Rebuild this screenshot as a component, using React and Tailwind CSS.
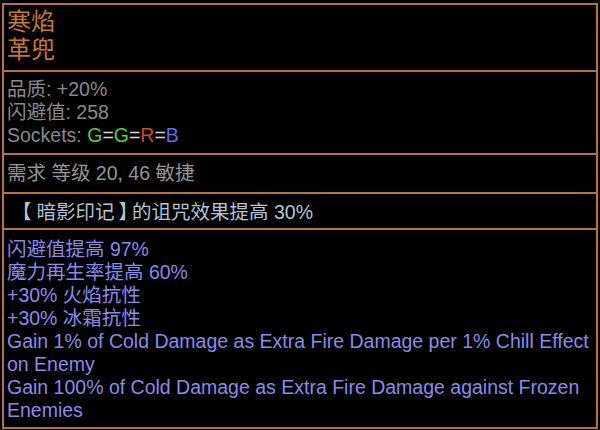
const FONT = "font-['Liberation_Sans','Noto_Sans_CJK_SC',sans-serif]";

function Section({ className = "", children }) {
  return <div className={`px-[3px] ${className}`}>{children}</div>;
}

function Divider() {
  return <div className="h-[2px] bg-[#b8713a]" />;
}

const explicit = [
  "闪避值提高 97%",
  "魔力再生率提高 60%",
  "+30% 火焰抗性",
  "+30% 冰霜抗性",
  "Gain 1% of Cold Damage as Extra Fire Damage per 1% Chill Effect on Enemy",
  "Gain 100% of Cold Damage as Extra Fire Damage against Frozen Enemies",
];

export default function App() {
  return (
    <div className={`w-[600px] h-[430px] bg-black pt-[3px] pl-[2px] pr-[2px] pb-[1px] ${FONT}`}>
      <div className="h-full flex flex-col border-2 border-[#b8713a] bg-black">
        <Section className="pt-[3px] pb-[6px] h-[65px]">
          <div className="text-[24px] leading-[28px] text-[#c8772f]">寒焰</div>
          <div className="text-[24px] leading-[28px] text-[#c8772f]">革兜</div>
        </Section>
        <Divider />
        <Section className="pt-[6px] h-[81px] text-[19.5px] leading-[23px] text-[#8a8a8a]">
          <div>品质: +20%</div>
          <div>闪避值: 258</div>
          <div>
            Sockets: <span className="text-[#4ccf4a]">G</span>
            <span className="text-[#d6d6d6]">=</span>
            <span className="text-[#4ccf4a]">G</span>
            <span className="text-[#d6d6d6]">=</span>
            <span className="text-[#d5442c]">R</span>
            <span className="text-[#d6d6d6]">=</span>
            <span className="text-[#5b6de6]">B</span>
          </div>
        </Section>
        <Divider />
        <Section className="pt-[7px] h-[37px] text-[19.5px] leading-[23px] text-[#959595]">
          需求 等级 20, 46 敏捷
        </Section>
        <Divider />
        <Section className="pt-[7px] h-[34px] text-[19.5px] leading-[23px] text-[#b2c5d6]">
          <span className="pl-[5px] pr-[5px]">【</span>暗影印记
          <span className="pl-[4px] tracking-[-6px]">】</span>的诅咒效果提高 30%
        </Section>
        <Divider />
        <Section className="pt-[8px] flex-1 text-[19.5px] leading-[23px] text-[#8a8aee]">
          {explicit.map((line) => (
            <div key={line}>{line}</div>
          ))}
        </Section>
      </div>
    </div>
  );
}
